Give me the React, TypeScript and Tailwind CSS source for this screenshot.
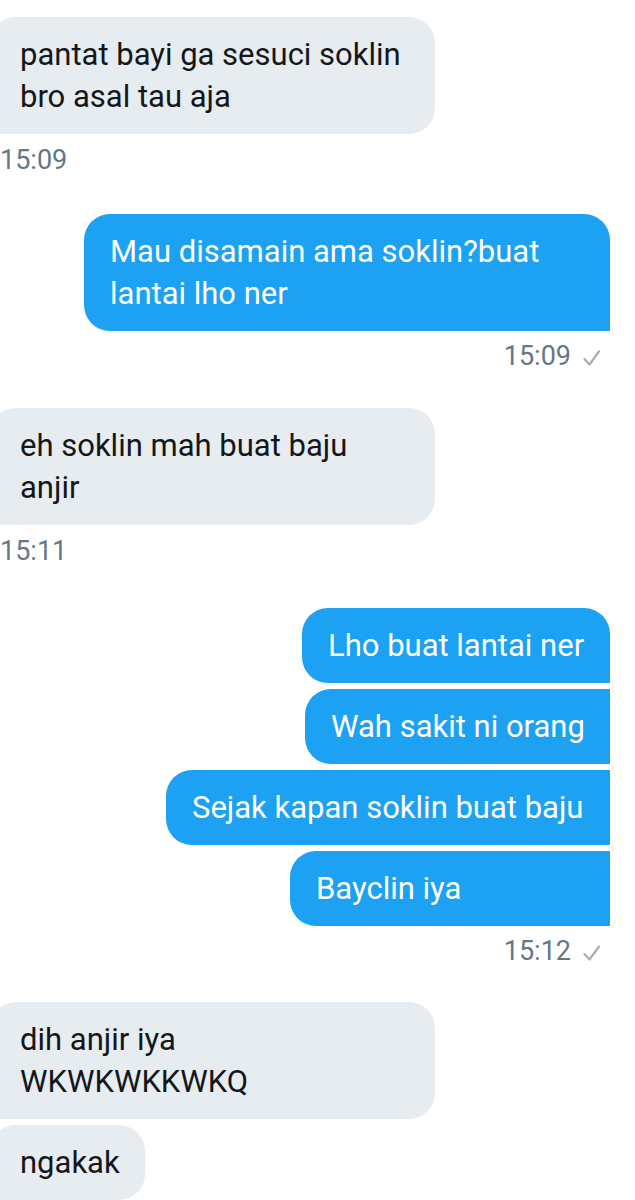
const font = { fontFamily: 'Roboto, "Noto Sans", sans-serif' };

type Corner = 'first' | 'middle' | 'last' | 'single';

function Received({ text, w }: { text: string; w?: string }) {
  return (
    <div className={`-ml-[10px] rounded-[26px] rounded-bl-none bg-[#e6ecf0] pl-[30px] pr-[26px] py-[16.5px] text-[31px] leading-[42px] text-[#14171a] ${w ?? 'w-fit max-w-[445px]'}`}>
      {text}
    </div>
  );
}

function Sent({ text, corner, w }: { text: string; corner: Corner; w?: string }) {
  const shape =
    corner === 'single' || corner === 'first'
      ? 'rounded-[26px] rounded-br-none'
      : 'rounded-[26px] rounded-r-none';
  return (
    <div className={`self-end mr-[25px] bg-[#1da1f2] pl-[26px] pr-[25px] py-[16.5px] text-[31px] leading-[42px] text-white ${shape} ${w ?? 'w-fit max-w-[526px]'}`}>
      {text}
    </div>
  );
}

function Check() {
  return (
    <svg width="20" height="20" viewBox="0 0 20 20" className="ml-[11px] mt-[3px]">
      <path d="M2.5 11 L7.5 16.5 L17 3.5" fill="none" stroke="#a4b0b9" strokeWidth="2.2" strokeLinecap="round" strokeLinejoin="round" />
    </svg>
  );
}

function TimeLeft({ t }: { t: string }) {
  return <div className="mt-[10px] text-[27px] leading-[32px] text-[#657786]">{t}</div>;
}

function TimeRight({ t }: { t: string }) {
  return (
    <div className="mt-[9px] mr-[33px] flex items-center self-end text-[27px] leading-[32px] text-[#657786]">
      {t}
      <Check />
    </div>
  );
}

export default function App() {
  return (
    <div className="w-[635px] h-[1200px] overflow-hidden bg-white flex flex-col pt-[17px]" style={font}>
      <Received text="pantat bayi ga sesuci soklin bro asal tau aja" w="w-[445px]" />
      <TimeLeft t="15:09" />

      <div className="h-[42px]" />
      <Sent text="Mau disamain ama soklin?buat lantai lho ner" corner="single" w="w-[526px]" />
      <TimeRight t="15:09" />

      <div className="h-[39px]" />
      <Received text="eh soklin mah buat baju anjir" w="w-[445px]" />
      <TimeLeft t="15:11" />

      <div className="h-[45px]" />
      <div className="flex flex-col gap-[6px]">
        <Sent text="Lho buat lantai ner" corner="first" w="w-[308px]" />
        <Sent text="Wah sakit ni orang" corner="middle" w="w-[305px]" />
        <Sent text="Sejak kapan soklin buat baju" corner="middle" w="w-[444px]" />
        <Sent text="Bayclin iya" corner="last" w="w-[320px]" />
      </div>
      <TimeRight t="15:12" />

      <div className="h-[38px]" />
      <div className="flex flex-col gap-[6px]">
        <Received text="dih anjir iya WKWKWKKWKQ" w="w-[445px]" />
        <div className="-ml-[10px] w-[155px] rounded-[26px] rounded-bl-none bg-[#e6ecf0] pl-[30px] py-[16.5px] text-[31px] leading-[42px] text-[#14171a]">
          ngakak
        </div>
      </div>
    </div>
  );
}
